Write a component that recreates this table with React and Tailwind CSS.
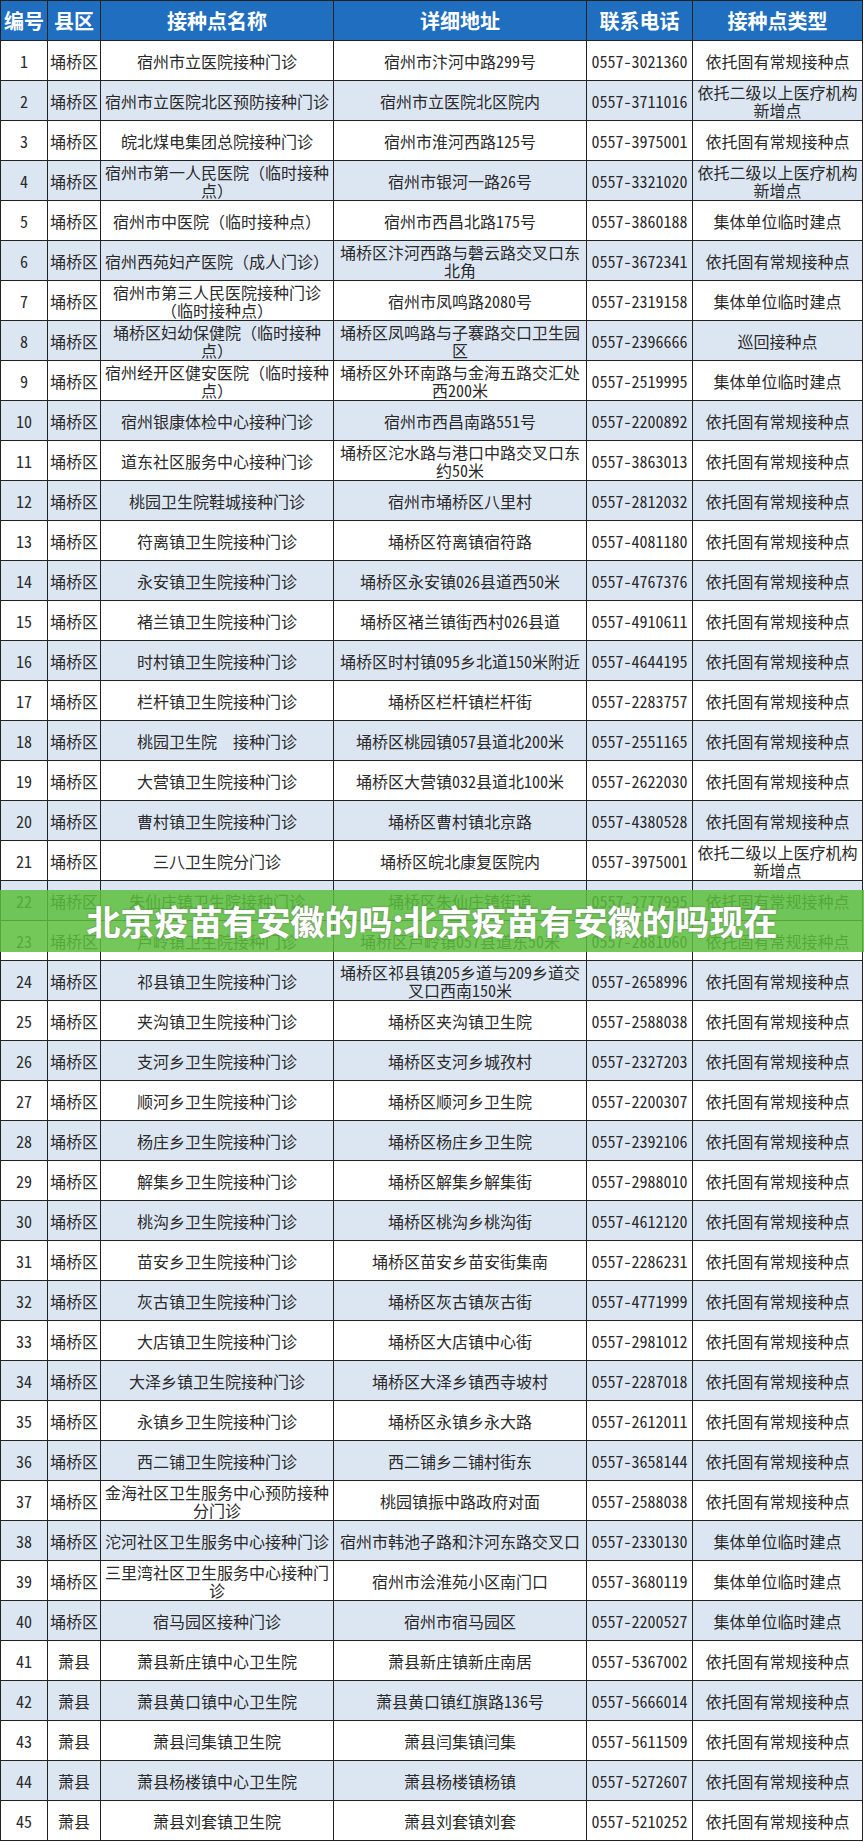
import React from "react";

const T1 = "依托固有常规接种点";
const T2 = "依托二级以上医疗机构新增点";
const T3 = "集体单位临时建点";
const T4 = "巡回接种点";

const DATA = [
  ["宿州市立医院接种门诊", "宿州市汴河中路299号", "0557-3021360", T1],
  ["宿州市立医院北区预防接种门诊", "宿州市立医院北区院内", "0557-3711016", T2],
  ["皖北煤电集团总院接种门诊", "宿州市淮河西路125号", "0557-3975001", T1],
  ["宿州市第一人民医院（临时接种点）", "宿州市银河一路26号", "0557-3321020", T2],
  ["宿州市中医院（临时接种点）", "宿州市西昌北路175号", "0557-3860188", T3],
  ["宿州西苑妇产医院（成人门诊）", "埇桥区汴河西路与磬云路交叉口东北角", "0557-3672341", T1],
  ["宿州市第三人民医院接种门诊（临时接种点）", "宿州市凤鸣路2080号", "0557-2319158", T3],
  ["埇桥区妇幼保健院（临时接种点）", "埇桥区凤鸣路与子褰路交口卫生园区", "0557-2396666", T4],
  ["宿州经开区健安医院（临时接种点）", "埇桥区外环南路与金海五路交汇处西200米", "0557-2519995", T3],
  ["宿州银康体检中心接种门诊", "宿州市西昌南路551号", "0557-2200892", T1],
  ["道东社区服务中心接种门诊", "埇桥区沱水路与港口中路交叉口东约50米", "0557-3863013", T1],
  ["桃园卫生院鞋城接种门诊", "宿州市埇桥区八里村", "0557-2812032", T1],
  ["符离镇卫生院接种门诊", "埇桥区符离镇宿符路", "0557-4081180", T1],
  ["永安镇卫生院接种门诊", "埇桥区永安镇026县道西50米", "0557-4767376", T1],
  ["褚兰镇卫生院接种门诊", "埇桥区褚兰镇街西村026县道", "0557-4910611", T1],
  ["时村镇卫生院接种门诊", "埇桥区时村镇095乡北道150米附近", "0557-4644195", T1],
  ["栏杆镇卫生院接种门诊", "埇桥区栏杆镇栏杆街", "0557-2283757", T1],
  ["桃园卫生院　接种门诊", "埇桥区桃园镇057县道北200米", "0557-2551165", T1],
  ["大营镇卫生院接种门诊", "埇桥区大营镇032县道北100米", "0557-2622030", T1],
  ["曹村镇卫生院接种门诊", "埇桥区曹村镇北京路", "0557-4380528", T1],
  ["三八卫生院分门诊", "埇桥区皖北康复医院内", "0557-3975001", T2],
  ["朱仙庄镇卫生院接种门诊", "埇桥区朱仙庄镇街道", "0557-2777995", T1],
  ["芦岭镇卫生院接种门诊", "埇桥区芦岭镇057县道东50米", "0557-2881060", T1],
  ["祁县镇卫生院接种门诊", "埇桥区祁县镇205乡道与209乡道交叉口西南150米", "0557-2658996", T1],
  ["夹沟镇卫生院接种门诊", "埇桥区夹沟镇卫生院", "0557-2588038", T1],
  ["支河乡卫生院接种门诊", "埇桥区支河乡城孜村", "0557-2327203", T1],
  ["顺河乡卫生院接种门诊", "埇桥区顺河乡卫生院", "0557-2200307", T1],
  ["杨庄乡卫生院接种门诊", "埇桥区杨庄乡卫生院", "0557-2392106", T1],
  ["解集乡卫生院接种门诊", "埇桥区解集乡解集街", "0557-2988010", T1],
  ["桃沟乡卫生院接种门诊", "埇桥区桃沟乡桃沟街", "0557-4612120", T1],
  ["苗安乡卫生院接种门诊", "埇桥区苗安乡苗安街集南", "0557-2286231", T1],
  ["灰古镇卫生院接种门诊", "埇桥区灰古镇灰古街", "0557-4771999", T1],
  ["大店镇卫生院接种门诊", "埇桥区大店镇中心街", "0557-2981012", T1],
  ["大泽乡镇卫生院接种门诊", "埇桥区大泽乡镇西寺坡村", "0557-2287018", T1],
  ["永镇乡卫生院接种门诊", "埇桥区永镇乡永大路", "0557-2612011", T1],
  ["西二铺卫生院接种门诊", "西二铺乡二铺村街东", "0557-3658144", T1],
  ["金海社区卫生服务中心预防接种分门诊", "桃园镇振中路政府对面", "0557-2588038", T1],
  ["沱河社区卫生服务中心接种门诊", "宿州市韩池子路和汴河东路交叉口", "0557-2330130", T3],
  ["三里湾社区卫生服务中心接种门诊", "宿州市浍淮苑小区南门口", "0557-3680119", T3],
  ["宿马园区接种门诊", "宿州市宿马园区", "0557-2200527", T3],
  ["萧县新庄镇中心卫生院", "萧县新庄镇新庄南居", "0557-5367002", T1],
  ["萧县黄口镇中心卫生院", "萧县黄口镇红旗路136号", "0557-5666014", T1],
  ["萧县闫集镇卫生院", "萧县闫集镇闫集", "0557-5611509", T1],
  ["萧县杨楼镇中心卫生院", "萧县杨楼镇杨镇", "0557-5272607", T1],
  ["萧县刘套镇卫生院", "萧县刘套镇刘套", "0557-5210252", T1],
];

const GRID = "grid grid-cols-[47px_53px_233px_253px_106px_170px]";

function Txt({ s }) {
  const parts = s.split(/([0-9-]+)/);
  return (
    <span>
      {parts.map((p, i) =>
        /^[0-9-]+$/.test(p) ? (
          <span key={i} className="[font-feature-settings:'hwid']">
            {p}
          </span>
        ) : (
          <React.Fragment key={i}>{p}</React.Fragment>
        )
      )}
    </span>
  );
}

function Cell({ children, nowrap }) {
  return (
    <div
      className={
        nowrap
          ? "flex h-10 items-center justify-center whitespace-nowrap border-b border-r border-[#222] text-center text-[16px] leading-[18px]"
          : "flex h-10 items-center justify-center border-b border-r border-[#222] text-center text-[16px] leading-[18px]"
      }
    >
      {children}
    </div>
  );
}

function HeadCell({ children }) {
  return (
    <div className="flex h-10 items-center justify-center whitespace-nowrap border-b border-r border-[#222] text-[20px] font-bold leading-none text-white">
      {children}
    </div>
  );
}

export default function App() {
  return (
    <div className="relative w-[864px] bg-white font-['Noto_Sans_CJK_SC',sans-serif] text-[#2a2a2a]">
      <div className="w-[863px] border-l border-t border-[#222]">
        <div className={GRID + " bg-[#1f6ebf]"}>
          <HeadCell>编号</HeadCell>
          <HeadCell>县区</HeadCell>
          <HeadCell>接种点名称</HeadCell>
          <HeadCell>详细地址</HeadCell>
          <HeadCell>联系电话</HeadCell>
          <HeadCell>接种点类型</HeadCell>
        </div>
        {DATA.map((r, i) => (
          <div
            key={i}
            className={i % 2 === 1 ? GRID + " bg-[#dce6f2]" : GRID + " bg-white"}
          >
            <Cell nowrap>
              <Txt s={String(i + 1)} />
            </Cell>
            <Cell nowrap>
              <span>{i < 40 ? "埇桥区" : "萧县"}</span>
            </Cell>
            <Cell>
              <Txt s={r[0]} />
            </Cell>
            <Cell>
              <Txt s={r[1]} />
            </Cell>
            <Cell nowrap>
              <Txt s={r[2]} />
            </Cell>
            <Cell>
              <Txt s={r[3]} />
            </Cell>
          </div>
        ))}
      </div>
      <div className="absolute left-0 top-[890px] flex h-[62px] w-full items-center justify-center bg-[rgba(92,190,60,0.85)]">
        <span className="text-[34px] font-bold leading-none text-white [text-shadow:0_0_2px_rgba(0,0,0,0.5),0_0_1px_rgba(255,255,255,1)]">
          北京疫苗有安徽的吗:北京疫苗有安徽的吗现在
        </span>
      </div>
    </div>
  );
}
